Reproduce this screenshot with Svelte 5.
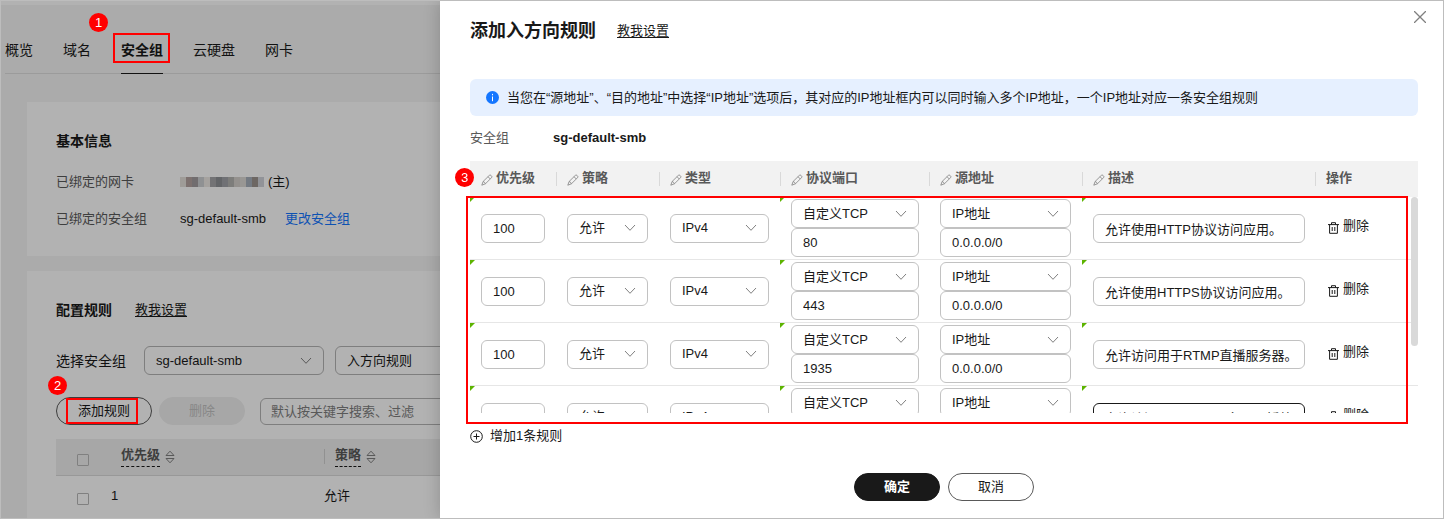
<script lang="ts">
	const tabs = ['概览', '域名', '安全组', '云硬盘', '网卡'];
	const columns = ['优先级', '策略', '类型', '协议端口', '源地址', '描述'];

	let rules = $state([
		{ priority: '100', port: '80', source: '0.0.0.0/0', desc: '允许使用HTTP协议访问应用。' },
		{ priority: '100', port: '443', source: '0.0.0.0/0', desc: '允许使用HTTPS协议访问应用。' },
		{ priority: '100', port: '1935', source: '0.0.0.0/0', desc: '允许访问用于RTMP直播服务器。' },
		{ priority: '100', port: '1985', source: '0.0.0.0/0', desc: '允许访问HTTP API服务器，播放HTTP流。' }
	]);

	// 打码的IP地址
	const mosaic = [
		'#e4e0da', '#b3a39f', '#a29c9f', '#cdd0d3', '#ece8e4', '#a5a5a8', '#8f9196', '#a1a3a8',
		'#b3b4b0', '#d4d0cc', '#dcd8d4', '#a7afbb', '#9c948f', '#d0d3da'
	];

	function addRule() {
		rules.push({ priority: '1', port: '', source: '0.0.0.0/0', desc: '' });
	}

	function removeRule(index: number) {
		rules.splice(index, 1);
	}
</script>

{#snippet dropdown(label: string, value: string)}
	<span class="dropdown">
		<select aria-label={label}>
			<option>{value}</option>
		</select>
		<svg class="chevron" viewBox="0 0 12 8" aria-hidden="true">
			<path d="M1 1l5 5.3L11 1" />
		</svg>
	</span>
{/snippet}

{#snippet sorter()}
	<svg class="sorter" viewBox="0 0 10 14" aria-hidden="true">
		<path d="M5 1.2L9 5.5H1zM5 12.8L9 8.5H1z" />
	</svg>
{/snippet}

<div class="frame">
	<main class="console">
		<nav class="tabs">
			{#each tabs as tab}
				<a href="#{tab}" class:active={tab === '安全组'}>
					{tab}
					{#if tab === '安全组'}
						<span class="mark mark-tab"></span>
						<span class="step step-tab">1</span>
					{/if}
				</a>
			{/each}
		</nav>

		<section class="card">
			<h2>基本信息</h2>
			<dl>
				<dt>已绑定的网卡</dt>
				<dd>
					<span class="mosaic">
						{#each mosaic as color}
							<i style="background: {color}"></i>
						{/each}
					</span>
					(主)
				</dd>
				<dt>已绑定的安全组</dt>
				<dd>sg-default-smb <a class="change" href="#change">更改安全组</a></dd>
			</dl>
		</section>

		<section class="card rules">
			<div class="heading">
				<h2>配置规则</h2>
				<a class="guide" href="#guide">教我设置</a>
			</div>
			<div class="filters">
				<span class="filter-label">选择安全组</span>
				{@render dropdown('选择安全组', 'sg-default-smb')}
				{@render dropdown('方向', '入方向规则')}
			</div>
			<div class="toolbar">
				<button class="pill">
					添加规则
					<span class="mark mark-add"></span>
					<span class="step step-add">2</span>
				</button>
				<button class="pill" disabled>删除</button>
				<input class="search" aria-label="搜索" placeholder="默认按关键字搜索、过滤" />
			</div>
			<table class="list">
				<thead>
					<tr>
						<th class="check"><input type="checkbox" aria-label="全选" /></th>
						<th class="prio">
							<span class="sortable"><span class="term">优先级</span>{@render sorter()}</span>
						</th>
						<th class="divided">
							<span class="sortable"><span class="term">策略</span>{@render sorter()}</span>
						</th>
					</tr>
				</thead>
				<tbody>
					<tr>
						<td class="check"><input type="checkbox" aria-label="选择规则1" /></td>
						<td>1</td>
						<td>允许</td>
					</tr>
				</tbody>
			</table>
		</section>
	</main>

	<div class="drawer" role="dialog" aria-label="添加入方向规则">
		<header>
			<h1>添加入方向规则</h1>
			<a class="guide" href="#guide">教我设置</a>
			<button class="close" aria-label="关闭">
				<svg viewBox="0 0 12 12"><path d="M0 0l12 12M12 0L0 12" /></svg>
			</button>
		</header>

		<p class="notice">
			<svg viewBox="0 0 13 13" aria-hidden="true">
				<circle cx="6.5" cy="6.5" r="6.5" />
				<path d="M6.5 5.5v4.7M6.5 2.9v1.4" />
			</svg>
			<span>当您在“源地址”、“目的地址”中选择“IP地址”选项后，其对应的IP地址框内可以同时输入多个IP地址，一个IP地址对应一条安全组规则</span>
		</p>

		<p class="group"><span>安全组</span><strong>sg-default-smb</strong></p>

		<div class="editor">
			<div class="scroll">
				<table class="rule-table">
					<colgroup>
						<col class="c-prio" />
						<col class="c-policy" />
						<col class="c-type" />
						<col class="c-port" />
						<col class="c-source" />
						<col />
						<col class="c-action" />
					</colgroup>
					<thead>
						<tr>
							{#each columns as column}
								<th>
									<span class="th-text">
										<svg class="pencil" viewBox="0 0 12 12" aria-hidden="true">
											<path
												d="M.8 11.2l1.3-3.7 6.2-6.1q.8-.8 1.7 0l.6.6q.8.9 0 1.7L4.4 9.8zM2.1 7.5q1.7.4 2.3 2.3M7 2.7L9.3 5"
											/>
										</svg>
										{column}
									</span>
								</th>
							{/each}
							<th><span class="th-text">操作</span></th>
						</tr>
					</thead>
					<tbody>
						{#each rules as rule, i}
							<tr>
								<td class="edited"><input aria-label="优先级" bind:value={rule.priority} /></td>
								<td>{@render dropdown('策略', '允许')}</td>
								<td>{@render dropdown('类型', 'IPv4')}</td>
								<td class="edited">
									{@render dropdown('协议', '自定义TCP')}
									<input aria-label="端口" bind:value={rule.port} />
								</td>
								<td>
									{@render dropdown('源地址类型', 'IP地址')}
									<input aria-label="源地址" bind:value={rule.source} />
								</td>
								<td class="edited">
									<input class:current={i === 3} aria-label="描述" bind:value={rule.desc} />
								</td>
								<td>
									<button class="remove" onclick={() => removeRule(i)}>
										<svg viewBox="0 0 11 12" aria-hidden="true">
											<path d="M0 2.6h11M3.5 2.4V.7h4v1.7M1.6 2.8v8.5h7.8V2.8M4.2 5v4M6.8 5v4" />
										</svg>
										删除
									</button>
								</td>
							</tr>
						{/each}
					</tbody>
				</table>
			</div>
			<span class="thumb"></span>
			<span class="mark mark-rules"></span>
			<span class="step step-rules">3</span>
		</div>

		<button class="add" onclick={addRule}>
			<svg viewBox="0 0 13 13" aria-hidden="true">
				<circle cx="6.5" cy="6.5" r="5.8" />
				<path d="M3.5 6.5h6M6.5 3.5v6" />
			</svg>
			增加1条规则
		</button>

		<footer>
			<button class="pill primary">确定</button>
			<button class="pill">取消</button>
		</footer>
	</div>
</div>

<style>
	:global(body) {
		margin: 0;
	}

	.frame {
		display: grid;
		grid-template-columns: 439px minmax(0, 1fr);
		box-sizing: border-box;
		height: 100vh;
		border: 1px solid #bdbdbd;
		overflow: hidden;
		color: #191919;
		font: 13px/20px 'Liberation Sans', 'Noto Sans CJK SC', sans-serif;
	}

	.frame * {
		box-sizing: border-box;
	}

	h1,
	h2,
	p,
	dl,
	dd {
		margin: 0;
	}

	h2 {
		font-size: 14px;
		line-height: 20px;
	}

	a {
		color: inherit;
		text-decoration: none;
	}

	button,
	input,
	select {
		margin: 0;
		color: inherit;
		font: inherit;
	}

	svg {
		flex: none;
		fill: none;
		stroke: currentColor;
	}

	/* 左侧页面 */
	.console {
		position: relative;
		display: flex;
		flex-direction: column;
		min-height: 0;
		background: linear-gradient(#fff, #fff) 0 0 / 100% 4px no-repeat #f5f5f5;
		overflow: hidden;
	}

	/* 遮罩 */
	.console::after {
		content: '';
		position: absolute;
		inset: 0;
		background: rgba(0, 0, 0, 0.3);
		pointer-events: none;
	}

	.tabs {
		display: flex;
		gap: 30px;
		margin-left: 4px;
		padding-top: 39px;
		border-bottom: 1px solid #dfdfdf;
		font-size: 14px;
	}

	.tabs a {
		position: relative;
		height: 34px;
		margin-bottom: -1px;
		white-space: nowrap;
	}

	.tabs .active {
		border-bottom: 1px solid #191919;
		font-weight: bold;
	}

	.card {
		margin: 28px 0 0 26px;
		padding: 29px 0 27px 29px;
		background: #fff;
	}

	dl {
		display: grid;
		grid-template-columns: 124px 1fr;
		row-gap: 17px;
		margin-top: 21px;
	}

	dt {
		color: #595959;
	}

	dd {
		display: flex;
		align-items: center;
		gap: 4px;
	}

	.change {
		margin-left: 15px;
		color: #1476ff;
	}

	.mosaic {
		display: flex;
		height: 10px;
	}

	.mosaic i {
		width: 6px;
	}

	.rules {
		flex: 1;
		margin-top: 15px;
		padding-bottom: 0;
	}

	.heading {
		display: flex;
		align-items: center;
		gap: 23px;
	}

	.guide {
		text-decoration: underline;
		text-underline-offset: 2px;
	}

	.filters {
		display: flex;
		align-items: center;
		gap: 11px;
		margin-top: 26px;
		white-space: nowrap;
	}

	.filter-label {
		margin-right: 7px;
		font-size: 14px;
	}

	.filters .dropdown {
		flex: none;
		width: 180px;
	}

	.toolbar {
		display: flex;
		align-items: center;
		gap: 7px;
		margin-top: 22px;
	}

	.pill {
		position: relative;
		flex: none;
		width: 86px;
		height: 28px;
		padding: 0;
		border: 1px solid #595959;
		border-radius: 14px;
		background: #fff;
	}

	.toolbar .pill:first-child {
		width: 96px;
	}

	.pill:disabled {
		border-color: #f0f0f0;
		background: #f0f0f0;
		color: #c2c2c2;
	}

	.toolbar .search {
		flex: none;
		width: 240px;
		height: 27px;
		margin-left: 8px;
		padding: 0 10px;
	}

	.search::placeholder {
		color: #808080;
		opacity: 1;
	}

	.list {
		width: 520px;
		margin-top: 14px;
		border-collapse: collapse;
		table-layout: fixed;
	}

	.list th {
		height: 36px;
		padding: 0;
		border-bottom: 1px solid #dadada;
		background: #f0f0f0;
		color: #595959;
		text-align: left;
		vertical-align: top;
	}

	.list td {
		height: 41px;
		padding: 0;
	}

	.list .check {
		width: 55px;
		padding: 6px 0 0 21px;
		vertical-align: middle;
	}

	.check input {
		display: block;
		width: 12px;
		height: 12px;
		border: 1px solid #b8b8b8;
		border-radius: 1px;
		appearance: none;
	}

	.list .prio {
		width: 213px;
		padding-left: 10px;
	}

	.list .divided {
		background: linear-gradient(#d0d0d0, #d0d0d0) 0 10px / 1px 15px no-repeat #f0f0f0;
		padding-left: 11px;
	}

	.sortable {
		display: flex;
		align-items: flex-end;
		gap: 5px;
	}

	.term {
		height: 28px;
		padding-top: 6px;
		border-bottom: 1px dashed #191919;
	}

	.sorter {
		width: 10px;
		height: 14px;
		margin-bottom: 3px;
		stroke: #808080;
	}

	/* 表单控件 */
	input:not([type]),
	select {
		display: block;
		width: 100%;
		height: 29px;
		padding: 0 11px;
		border: 1px solid #c2c2c2;
		border-radius: 6px;
		outline: none;
		background: #fff;
		appearance: none;
	}

	.rule-table input.current {
		border-color: #191919;
	}

	.dropdown {
		display: grid;
		align-items: center;
	}

	.dropdown > * {
		grid-area: 1 / 1;
	}

	.chevron {
		justify-self: end;
		width: 12px;
		height: 8px;
		margin-right: 12px;
		stroke: #808080;
		pointer-events: none;
	}

	.console select,
	.console .search {
		border-color: #b5b5b5;
	}

	/* 右侧抽屉 */
	.drawer {
		display: flex;
		flex-direction: column;
		z-index: 1;
		padding: 0 25px 0 30px;
		background: #fff;
		box-shadow: 0 0 16px rgba(0, 0, 0, 0.2);
	}

	header {
		display: flex;
		align-items: center;
		gap: 21px;
		height: 60px;
	}

	h1 {
		font-size: 18px;
		line-height: 28px;
	}

	.close {
		align-self: flex-start;
		margin: 10px -8px 0 auto;
		padding: 0;
		border: 0;
		background: none;
		color: #808080;
		line-height: 0;
	}

	.close svg {
		width: 12px;
		height: 12px;
		stroke-width: 1.3;
	}

	.notice {
		display: flex;
		align-items: center;
		gap: 8px;
		height: 37px;
		margin-top: 18px;
		padding: 0 16px;
		border-radius: 6px;
		background: #e6f0ff;
	}

	.notice svg {
		width: 13px;
		height: 13px;
		stroke: #fff;
	}

	.notice circle {
		fill: #1476ff;
		stroke: none;
	}

	.group {
		display: flex;
		margin-top: 12px;
	}

	.group span {
		width: 83px;
		color: #595959;
	}

	.editor {
		position: relative;
		margin-top: 13px;
	}

	.scroll {
		height: 252px;
		overflow-y: auto;
		scrollbar-width: none;
	}

	.rule-table {
		width: 100%;
		border-spacing: 0;
		table-layout: fixed;
	}

	.c-prio {
		width: 86px;
	}

	.c-policy {
		width: 103px;
	}

	.c-type {
		width: 121px;
	}

	.c-port {
		width: 149px;
	}

	.c-source {
		width: 153px;
	}

	.c-action {
		width: 103px;
	}

	.rule-table th {
		position: sticky;
		top: 0;
		z-index: 1;
		height: 36px;
		padding: 0 0 2px 11px;
		background: #f2f2f2;
		color: #595959;
		text-align: left;
	}

	.rule-table th + th {
		background: linear-gradient(#d9d9d9, #d9d9d9) 0 11px / 1px 14px no-repeat #f2f2f2;
	}

	.th-text {
		display: flex;
		align-items: center;
		gap: 3px;
	}

	.pencil {
		width: 12px;
		height: 12px;
		margin-top: 3px;
		stroke: #808080;
		stroke-width: 0.8;
	}

	.rule-table td {
		position: relative;
		height: 63px;
		padding: 2px 11px;
		border-bottom: 1px solid #e6e6e6;
	}

	.rule-table td:nth-child(4),
	.rule-table td:nth-child(6) {
		padding-right: 10px;
	}

	/* 已修改标记 */
	.edited::before {
		content: '';
		position: absolute;
		top: 0;
		left: 0;
		border-top: 5px solid #5cb300;
		border-right: 5px solid transparent;
	}

	.remove,
	.add {
		display: flex;
		align-items: center;
		gap: 4px;
		padding: 0;
		border: 0;
		background: none;
	}

	.remove {
		padding-bottom: 4px;
	}

	.remove svg {
		width: 11px;
		height: 12px;
		margin: 4px 0 0 2px;
	}

	.thumb {
		position: absolute;
		top: 36px;
		right: 0;
		width: 7px;
		height: 149px;
		border-radius: 4px;
		background: #d9d9d9;
	}

	.add {
		align-self: flex-start;
		gap: 7px;
		margin-top: 13px;
	}

	.add svg {
		width: 13px;
		height: 13px;
	}

	footer {
		display: flex;
		justify-content: center;
		gap: 8px;
		margin-top: 27px;
	}

	.primary {
		border-color: #191919;
		background: #191919;
		color: #fff;
		font-weight: bold;
	}

	/* 步骤标注 */
	.mark {
		position: absolute;
		z-index: 2;
		border: 2px solid #f00;
		pointer-events: none;
	}

	.step {
		position: absolute;
		z-index: 2;
		width: 19px;
		height: 19px;
		border-radius: 50%;
		background: #f00;
		color: #fff;
		font-size: 13px;
		font-weight: normal;
		line-height: 19px;
		text-align: center;
	}

	.mark-tab {
		inset: -7px -7px 10px -8px;
	}

	.step-tab {
		top: -27px;
		left: -32px;
	}

	.mark-add {
		inset: 0 13px 0 9px;
	}

	.step-add {
		top: -22px;
		left: -9px;
	}

	.mark-rules {
		inset: 35px 10px -11px -4px;
	}

	.step-rules {
		top: 7px;
		left: -15px;
	}
</style>
